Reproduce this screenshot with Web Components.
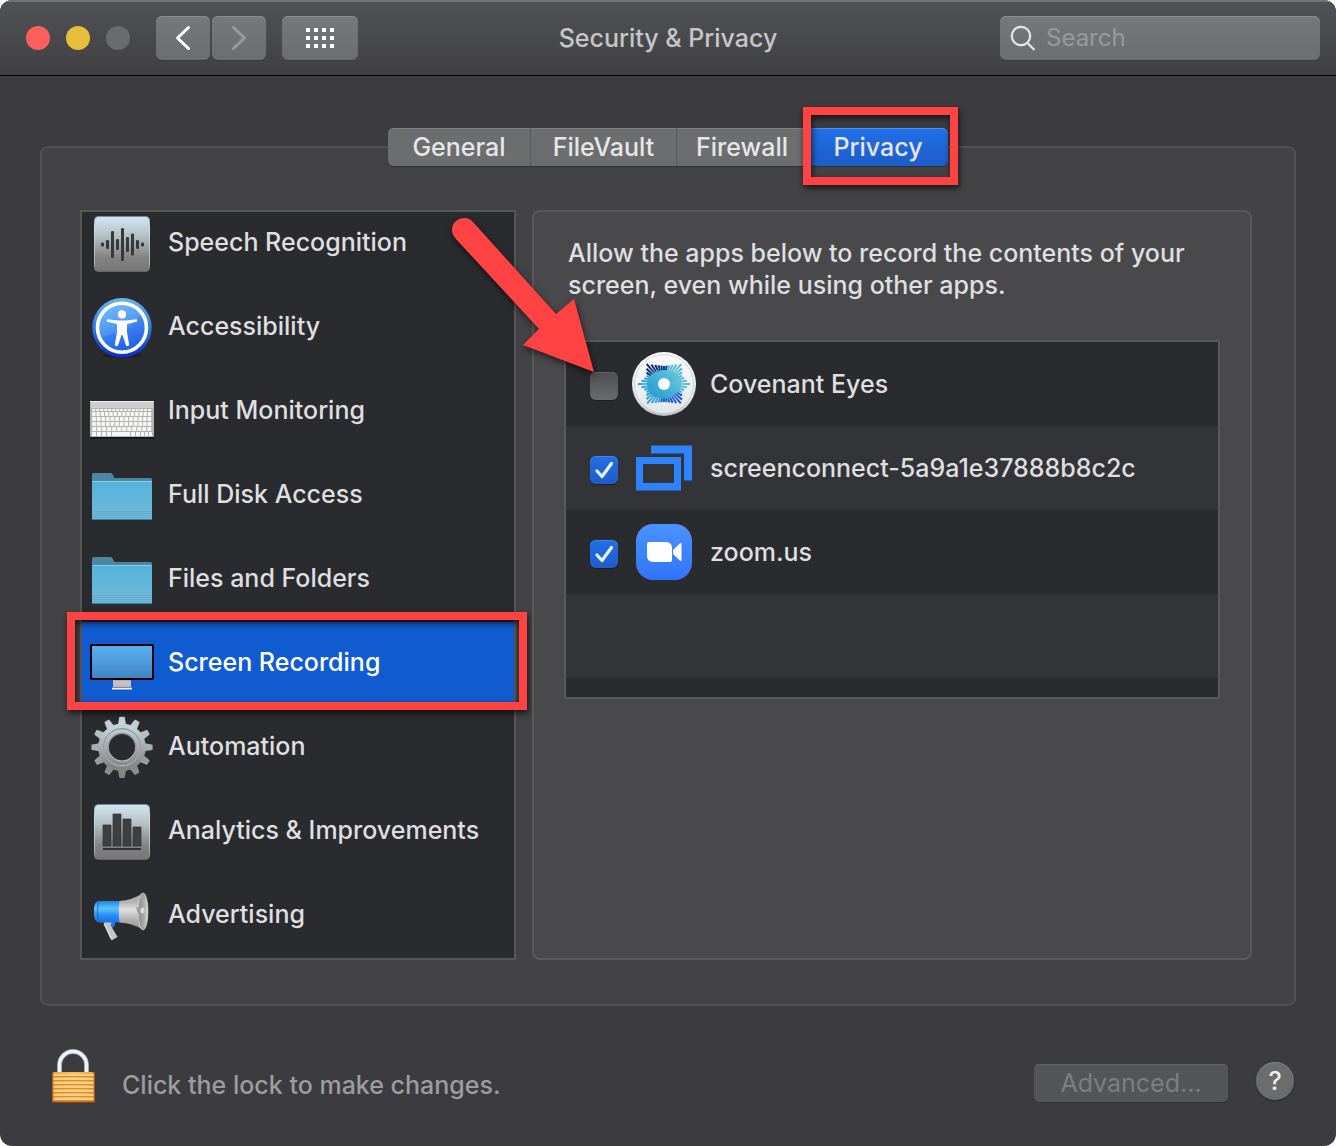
<!DOCTYPE html>
<html lang="en">
<head>
<meta charset="utf-8">
<title>Security &amp; Privacy</title>
<style>
  html, body { margin: 0; }
  body { background: #fff; font-family: Inter, "Liberation Sans", sans-serif; font-size: 25px; font-weight: 500; line-height: 32px; color: #dfdfe0; }
</style>
</head>
<body>
<pref-window>
  <window-toolbar slot="toolbar" heading="Security &amp; Privacy"></window-toolbar>
  <pane-tabs slot="tabs"></pane-tabs>
  <category-list slot="sidebar">
    <category-item icon="speech">Speech Recognition</category-item>
    <category-item icon="access">Accessibility</category-item>
    <category-item icon="keyboard">Input Monitoring</category-item>
    <category-item icon="folder">Full Disk Access</category-item>
    <category-item icon="folder">Files and Folders</category-item>
    <category-item icon="monitor" selected>Screen Recording</category-item>
    <category-item icon="gear">Automation</category-item>
    <category-item icon="chart">Analytics &amp; Improvements</category-item>
    <category-item icon="horn">Advertising</category-item>
  </category-list>
  <permission-panel slot="detail">
    <span slot="description">Allow the apps below to record the contents of your screen, even while using other apps.</span>
    <app-row icon="eyes" label="Covenant Eyes"></app-row>
    <app-row icon="connect" label="screenconnect-5a9a1e37888b8c2c" checked></app-row>
    <app-row icon="zoom" label="zoom.us" checked></app-row>
    <app-row></app-row>
    <app-row></app-row>
  </permission-panel>
  <window-footer slot="footer">Click the lock to make changes.</window-footer>
</pref-window>

<script>
const steel = id => `<linearGradient id="${id}" x1="0" y1="0" x2="0" y2="1"><stop offset="0" stop-color="#d3e6ef"/><stop offset=".35" stop-color="#b4c1c7"/><stop offset=".75" stop-color="#828282"/><stop offset="1" stop-color="#777"/></linearGradient>`;
const tile = `<defs>${steel('s')}<linearGradient id="e" x1="0" y1="0" x2="0" y2="1"><stop offset="0" stop-color="#6b8fa8"/><stop offset=".2" stop-color="#d4dfe4"/><stop offset=".85" stop-color="#b0b0b0"/><stop offset="1" stop-color="#666"/></linearGradient></defs><rect x="4.5" y="6.5" width="55" height="55" rx="4" fill="url(#s)" stroke="url(#e)"/>`;

function speech() {
  const heights = [4, 9, 27, 11, 33, 15, 22, 9, 4];
  return tile + heights.map((h, i) => `<rect x="${11 + i * 5}" y="${34.5 - h / 2}" width="3" height="${h}" rx="1.3" fill="#37393a"/>`).join('');
}
function keyboard() {
  let keys = '';
  const rows = [[31, 2, 15], [34, 4, 14], [39, 4, 13], [44, 4, 13], [49, 4, 12]];
  rows.forEach(([y, h, n]) => {
    const step = 60 / n;
    for (let i = 0; i < n; i++) keys += `<rect x="${2 + i * step + 0.2}" y="${y}" width="${step - 1}" height="${h}" rx=".6" fill="#f7f7f5"/>`;
  });
  [[2, 4], [7, 4], [12, 4], [17, 4], [22, 18], [41, 4], [46, 4], [51, 3], [55, 3], [59, 3]].forEach(([x, w]) => keys += `<rect x="${x}" y="54" width="${w}" height="4" rx=".6" fill="#f7f7f5"/>`);
  return `<rect x="0" y="58" width="64" height="3" rx="1" fill="#17181a"/><rect x="0" y="23" width="64" height="36" rx="1" fill="#b3b3b0"/><rect x="1" y="24" width="62" height="6" fill="#d0cfd0"/><rect x="0" y="23" width="64" height="1" fill="#eee"/>` + keys;
}
function gear() {
  let teeth = '';
  for (let i = 0; i < 12; i++) teeth += `<path d="M27.5 14 29.2 3.3Q29.4 2.7 30 2.7H34Q34.6 2.7 34.8 3.3L36.5 14Z" transform="rotate(${i * 30} 32 33.3)" fill="${['#c7d5db','#c1cdd3','#b5bec3','#a7acae','#999b9c','#8b8c8d','#858586','#8b8c8d','#999b9c','#a7acae','#b5bec3','#c1cdd3'][i]}"/>`;
  return `<defs><linearGradient id="g" x1="0" y1="0" x2="0" y2="1"><stop offset="0" stop-color="#c3d0d6"/><stop offset="1" stop-color="#858586"/></linearGradient><linearGradient id="h" x1="0" y1="0" x2="0" y2="1"><stop offset="0" stop-color="#798387"/><stop offset="1" stop-color="#bababa"/></linearGradient></defs>${teeth}<circle cx="32" cy="33.3" r="18.8" fill="none" stroke="url(#g)" stroke-width="10"/><circle cx="32" cy="33.3" r="18.6" fill="none" stroke="url(#h)" stroke-width="1"/><circle cx="32" cy="33.3" r="13.7" fill="none" stroke="url(#h)" stroke-width="1.2"/>`;
}
function eyes() {
  const hull = [[58, 32], [50, 40], [50, 51.5], [32, 50], [14.5, 51.5], [14.5, 40], [6, 32], [14.5, 24], [14.5, 12], [32, 14], [50, 12], [50, 24]];
  const reach = a => {
    const dx = Math.cos(a), dy = Math.sin(a);
    let best = 20;
    hull.forEach((p, i) => {
      const q = hull[(i + 1) % hull.length];
      const ex = q[0] - p[0], ey = q[1] - p[1], px = p[0] - 32, py = p[1] - 32;
      const det = dx * ey - dy * ex;
      if (Math.abs(det) < 1e-6) return;
      const t = (px * ey - py * ex) / det, u = (px * dy - py * dx) / det;
      if (t > 0 && u >= 0 && u <= 1) best = t;
    });
    return best;
  };
  let rays = '';
  const count = 44;
  for (let i = 0; i < count; i++) {
    const deg = i * 360 / count, a = deg * Math.PI / 180, r = reach(a);
    let c = '#4fb9d8';
    if (deg > 32 && deg < 105) c = '#1556cc';
    else if (deg >= 105 && deg < 210) c = '#2ba4d0';
    else if (deg >= 210 && deg < 285) c = '#0b2f7c';
    const x1 = 32 + 8 * Math.cos(a), y1 = 32 + 8 * Math.sin(a), x2 = 32 + r * Math.cos(a), y2 = 32 + r * Math.sin(a);
    const nx = -Math.sin(a), ny = Math.cos(a);
    rays += `<path d="M${x1 + nx * .6} ${y1 + ny * .6}L${x2 + nx * 1.05} ${y2 + ny * 1.05}L${x2 - nx * 1.05} ${y2 - ny * 1.05}L${x1 - nx * .6} ${y1 - ny * .6}Z" fill="${c}"/>`;
  }
  return `<defs><linearGradient id="w" x1="0" y1="0" x2="0" y2="1"><stop offset="0" stop-color="#fff"/><stop offset=".8" stop-color="#dcdfe2"/><stop offset="1" stop-color="#b9bdc1"/></linearGradient><linearGradient id="f" x1="0" y1="0" x2="0" y2="1"><stop offset="0" stop-color="#fcfcfc"/><stop offset="1" stop-color="#e2e6ea"/></linearGradient><linearGradient id="t" x1="0" y1="1" x2="1" y2="0"><stop offset="0" stop-color="#1f97d0"/><stop offset="1" stop-color="#69c9dc"/></linearGradient></defs><circle cx="32" cy="32" r="32" fill="url(#w)"/><circle cx="32" cy="32" r="29.5" fill="url(#f)" stroke="#c9cccf" stroke-width=".8"/>${rays}<ellipse cx="32" cy="32" rx="17" ry="14" fill="url(#t)"/><path d="M32 46.500Q21 46.500 17 40L22 36 42 28 48 25Q51 33 46 39.500 41 46 32 46.500Z" fill="url(#t)"/><circle cx="32" cy="32" r="6" fill="#fafdff"/>`;
}
const icons = {
  speech: speech(),
  access: `<defs><linearGradient id="a" x1="0" y1="0" x2=".35" y2="1"><stop offset="0" stop-color="#7ec0fa"/><stop offset=".55" stop-color="#4f9af6"/><stop offset="1" stop-color="#2a66ea"/></linearGradient><linearGradient id="b" x1="0" y1="0" x2="0" y2="1"><stop offset="0" stop-color="#68b7ea"/><stop offset=".5" stop-color="#2f78ea"/><stop offset="1" stop-color="#0a2ccf"/></linearGradient></defs><ellipse cx="32" cy="61" rx="20" ry="3" fill="#1f2024"/><circle cx="32" cy="33.7" r="29.7" fill="url(#b)"/><circle cx="32" cy="33.7" r="24.5" fill="url(#a)"/><path d="M9.5 43C24 42 42 34 51 21A23 23 0 0 1 18 52Z" fill="#1457e8" opacity=".25"/><circle cx="32" cy="33.7" r="24.5" fill="none" stroke="#fff" stroke-width="3.6"/><circle cx="32" cy="20.4" r="4.1" fill="#fff"/><path d="M17.5 25.2 28 26.4H36L46.500 25.200Q48 26.500 46.700 27.800L37 30V38L39.200 51Q38 53 36 51.500L32.500 41H31.500L28 51.500Q26 53 24.800 51L27 38V30L17.300 27.800Q16 26.500 17.500 25.200Z" fill="#fff"/>`,
  keyboard: keyboard(),
  folder: `<defs><linearGradient id="d" x1="0" y1="0" x2="0" y2="1"><stop offset="0" stop-color="#53b2db"/><stop offset="1" stop-color="#74b9d9"/></linearGradient></defs><path d="M2 13Q2 11 4 11H20.500Q22 11 23 13L24 15.500Q24.500 16 26 16H60.500Q62 16 62 17.500V30H2Z" fill="#4d87a4"/><rect x="2" y="19" width="60" height="39" rx="1.500" fill="url(#d)"/><rect x="2.500" y="19" width="59" height="1" fill="#86cfee"/><path d="M2 49.500H62M2 51.500H62M2 53.500H62M2 55.500H62" stroke="#5ba5c6" stroke-width=".6"/><rect x="2.500" y="57" width="59" height="1" fill="#3b7e9e"/>`,
  monitor: `<defs><linearGradient id="m" x1="0" y1="0" x2="0" y2="1"><stop offset="0" stop-color="#5bafee"/><stop offset="1" stop-color="#3e86c5"/></linearGradient><linearGradient id="n" x1="0" y1="0" x2="0" y2="1"><stop offset="0" stop-color="#aaa"/><stop offset=".3" stop-color="#c7c7c9"/><stop offset="1" stop-color="#b8b8bb"/></linearGradient></defs><rect x="0" y="14" width="64" height="36" rx="2" fill="#000"/><rect x="2" y="16" width="60" height="32" fill="url(#m)"/><rect x="23" y="50" width="18" height="7.500" fill="url(#n)"/><rect x="22" y="57" width="20" height="1" fill="#85878c"/><rect x="22" y="58" width="20" height="1.500" fill="#f2f2f2"/>`,
  gear: gear(),
  chart: tile + `<path d="M13 27h8v21h-8zM23 16h8v32h-8zM33 21h8v27h-8zM43 29h8v19h-8z" fill="#3e3f40" stroke="#303132" stroke-width=".7"/><path d="M13 50h38v2H13z" fill="#303132"/>`,
  horn: `<defs><linearGradient id="j" x1="0" y1="0" x2="0" y2="1"><stop offset="0" stop-color="#1f86e6"/><stop offset=".35" stop-color="#5cc4ff"/><stop offset=".65" stop-color="#2792f7"/><stop offset="1" stop-color="#1a70e0"/></linearGradient><linearGradient id="k" x1="0" y1="0" x2="0" y2="1"><stop offset="0" stop-color="#a5a5a6"/><stop offset=".25" stop-color="#b5b5b6"/><stop offset=".45" stop-color="#e0e0e0"/><stop offset=".75" stop-color="#adadae"/><stop offset="1" stop-color="#949495"/></linearGradient><linearGradient id="l" x1="0" y1="0" x2="1" y2="0"><stop offset="0" stop-color="#8f8f90"/><stop offset=".6" stop-color="#a9a9aa"/><stop offset="1" stop-color="#dedede"/></linearGradient></defs><path d="M18 40H25.500L24 45 21 46Z" fill="#237ce4"/><path d="M13 39H22L20.500 43 27.500 55 22.500 58Q21 58.500 20.500 57L15 44Z" fill="#c5c5c7"/><path d="M14 42 21 56" stroke="#f2f2f2"/><path d="M9 19H30V40.500H9Q4 39 4 33V26Q4 20 9 19Z" fill="url(#j)"/><path d="M8.500 20Q6 29 8.500 40" stroke="#1462bf" fill="none" stroke-width=".8"/><path d="M29.500 19Q43 18 53 11V48Q43 41 29.500 40.500Q28 29 29.500 19Z" fill="url(#k)"/><ellipse cx="53" cy="29.500" rx="5" ry="18.500" fill="url(#l)" stroke="#d9d9da" stroke-width=".7"/><path d="M46 25.500H53A2 3 0 0 1 53 31.500H48Z" fill="#9a9a9b"/><ellipse cx="52.500" cy="28.500" rx="2.200" ry="3" fill="#dadada"/>`,
  eyes: eyes(),
  connect: `<path d="M19 9.500H60V44.500H52V17.500H19Z" fill="#2c83fb"/><path fill-rule="evenodd" d="M4 21H49V54.500H4ZM11 28V47H42V28Z" fill="#2c83fb"/>`,
  zoom: `<defs><linearGradient id="z" x1="0" y1="0" x2="0" y2="1"><stop offset="0" stop-color="#4a93ff"/><stop offset="1" stop-color="#3074f6"/></linearGradient></defs><rect x="4" y="4" width="56" height="56" rx="17" fill="url(#z)"/><path d="M17 22H34Q40 22.500 40 28V40Q40 42 38 42H21Q15 41.500 15 36V24Q15 22 17 22Z" fill="#fff"/><path d="M41 30 48 23.300Q49.500 22.500 49.500 24V40Q49.500 41.500 48 40.700L41 34Z" fill="#fff"/>`
};
const drawIcon = n => icons[n] ? `<svg width="64" height="64" viewBox="0 0 64 64" aria-hidden="true">${icons[n]}</svg>` : '';
const base = `:host,*{box-sizing:border-box} button,input{font:inherit;color:inherit;margin:0;padding:0;border:0;background:none} svg{display:block;flex:none}`;

class Base extends HTMLElement {
  connectedCallback() {
    if (this.shadowRoot) return;
    this.attachShadow({ mode: 'open' }).innerHTML = `<style>${base}${this.css()}</style>${this.html()}`;
  }
}

customElements.define('pref-window', class extends Base {
  css() { return `
    :host{display:flex;flex-direction:column;min-height:100vh;background:#3c3c40;border-radius:12px;overflow:hidden}
    main{flex:1;display:flex;flex-direction:column;padding:52px 40px 0}
    .tabs{display:flex;justify-content:center;z-index:1}
    .group{flex:1;display:flex;gap:16px;margin-top:-20px;padding:62px 42px 44px 38px;border:2px solid #505154;border-radius:8px;background:#434346}
    ::slotted([slot=sidebar]){flex:0 0 436px}
    ::slotted([slot=detail]){flex:1}`; }
  html() { return `<slot name="toolbar"></slot><main><div class="tabs"><slot name="tabs"></slot></div><section class="group"><slot name="sidebar"></slot><slot name="detail"></slot></section></main><slot name="footer"></slot>`; }
});

customElements.define('window-toolbar', class extends Base {
  css() { return `
    :host{display:grid;grid-template-columns:1fr auto 1fr;align-items:center;height:76px;padding:0 16px 1px;border-top:2px solid #707275;border-bottom:1px solid #000;background:linear-gradient(#515256,#404042)}
    .left{display:flex;align-items:center;padding-left:10px}
    .lights{display:flex;gap:16px;margin-right:26px}
    .lights button{width:24px;height:24px;border-radius:50%;background:#6a6b6d}
    .lights .close{background:#ff5f5a}.lights .min{background:#e5bf3c}
    .btn{width:54px;height:44px;display:grid;place-items:center;border-radius:6px;margin-right:2px;background:linear-gradient(#77787b,#6c6d70);box-shadow:inset 0 1px #8b8c8f,0 1px #38393b}
    .all{width:76px;margin-left:14px;margin-right:0}
    h1{margin:0;font-size:25px;font-weight:500;line-height:32px;color:#c6c6c8}
    .search{justify-self:end;width:320px;height:44px;display:flex;align-items:center;gap:10px;padding:0 10px;border-radius:6px;background:linear-gradient(#77787b,#6c6d70);box-shadow:inset 0 1px #8b8c8f,0 1px #38393b}
    input{min-width:0;flex:1;outline:0;font-size:24px;font-weight:400} input::placeholder{color:#98999b;opacity:1}`; }
  html() {
    let dots = '';
    for (let y = 0; y < 3; y++) for (let x = 0; x < 4; x++) dots += `<rect x="${x * 8}" y="${y * 8}" width="4" height="4"/>`;
    return `<div class="left"><div class="lights"><button class="close" aria-label="Close"></button><button class="min" aria-label="Minimize"></button><button aria-label="Zoom" disabled></button></div>
    <button class="btn" aria-label="Back"><svg width="16" height="26" fill="none" stroke="#fff" stroke-width="3" stroke-linecap="round" stroke-linejoin="round"><path d="M13.500 2.500 2.500 13 13.500 23.500"/></svg></button>
    <button class="btn" aria-label="Forward" disabled><svg width="16" height="26" fill="none" stroke="#98999b" stroke-width="3" stroke-linecap="round" stroke-linejoin="round"><path d="M2.500 2.500 13.500 13 2.500 23.500"/></svg></button>
    <button class="btn all" aria-label="Show All"><svg width="28" height="20" fill="#fff">${dots}</svg></button></div>
    <h1>${this.getAttribute('heading').replace('&', '&amp;')}</h1>
    <label class="search"><svg width="26" height="28" fill="none" stroke="#e6e6e7" stroke-width="2.200"><circle cx="11" cy="12" r="9.200"/><path d="M17.500 19 24.500 26"/></svg><input type="text" placeholder="Search" aria-label="Search"></label>`;
  }
});

customElements.define('call-out', class extends Base {
  css() { return `:host{display:block;position:absolute;border:8px solid #ff4343;filter:drop-shadow(1px 3px 3px rgba(0,0,0,.7));pointer-events:none}`; }
  html() { return ''; }
});

customElements.define('pane-tabs', class extends Base {
  css() { return `
    :host{display:block}
    [role=tablist]{display:flex;gap:1px;position:relative;border-radius:6px;background:#58595b;box-shadow:0 1px 1px #303133}
    button{height:38px;min-width:130px;padding:0;background:#6c6d6f;color:#e6e6e7;line-height:38px;box-shadow:inset 0 1px #828385}
    button:first-child{width:142px;border-radius:6px 0 0 6px}
    button:nth-child(2){width:145px}
    .on{width:140px;border-radius:0 6px 6px 0;background:linear-gradient(#2170e8,#1d5dc8);box-shadow:inset 0 1px #4b8cf0}
    call-out{top:-21px;right:-10px;width:155px;height:78px}`; }
  html() { return `<div role="tablist"><button role="tab">General</button><button role="tab">FileVault</button><button role="tab">Firewall</button><button role="tab" class="on" aria-selected="true">Privacy</button><call-out></call-out></div>`; }
});

customElements.define('category-list', class extends Base {
  css() { return `
    :host{display:block;position:relative}
    nav{height:750px;display:flex;flex-direction:column;justify-content:flex-end;overflow:hidden;padding-bottom:2px;border:2px solid #555657;background:#2a2b2f}
    call-out{left:-13px;right:-11px;bottom:250px;height:98px}`; }
  html() { return `<nav aria-label="Privacy categories"><slot></slot></nav><call-out></call-out>`; }
});

customElements.define('category-item', class extends Base {
  css() { return `
    :host{display:block;flex:none}
    button{display:flex;align-items:center;gap:14px;width:100%;height:84px;padding:0 8px;text-align:left}
    :host([selected]) button{color:#fff;background:linear-gradient(#105bd0,#105bd0) 0 2px no-repeat}`; }
  html() { return `<button>${drawIcon(this.getAttribute('icon'))}<span><slot></slot></span></button>`; }
});

customElements.define('permission-panel', class extends Base {
  css() { return `
    :host{display:block;position:relative;padding:25px 30px 0;border:2px solid #58595c;border-radius:8px;background:#49494c}
    p{margin:0 4px 39px}
    .apps{height:359px;overflow:hidden;border:2px solid #58595b;background:#2a2b2f}
    .arrow{position:absolute;left:-90px;top:-2px;overflow:visible;filter:drop-shadow(1px 3px 3px rgba(0,0,0,.6));pointer-events:none}`; }
  html() { return `<p><slot name="description"></slot></p><div class="apps"><slot></slot></div>
    <svg class="arrow" width="160" height="170" viewBox="444 210 160 170" aria-hidden="true"><path d="M455 238A11.500 11.500 0 0 1 473 222L556 314 574 299 594 372 523 345 539 329Z" fill="#ff4343"/></svg>`; }
});

customElements.define('app-row', class extends Base {
  css() { return `
    :host{display:block;height:84px} :host(:nth-of-type(even)){background:#333438}
    label{display:flex;align-items:center;height:84px;padding-left:24px;gap:14px}
    .box{display:grid;margin-top:4px} .box>*{grid-area:1/1}
    input{appearance:none;width:28px;height:28px;border-radius:6px;background:linear-gradient(#4d4e50,#6a6b6c);box-shadow:inset 0 1px #626365,0 1px 1px #1c1d1f}
    input:checked{background:linear-gradient(#216fe6,#1d5ec9);box-shadow:inset 0 1px #4385ec,0 1px 1px #1c1d1f}
    .box svg{pointer-events:none;visibility:hidden} input:checked+svg{visibility:visible}`; }
  html() {
    const name = this.getAttribute('label');
    return name ? `<label><span class="box"><input type="checkbox" ${this.hasAttribute('checked') ? 'checked' : ''}><svg width="28" height="28" fill="none" stroke="#e9effa" stroke-width="3.200" stroke-linecap="round" stroke-linejoin="round"><path d="M7 15 12 20.500 21.500 7.500"/></svg></span>${drawIcon(this.getAttribute('icon'))}<span>${name}</span></label>` : '';
  }
});

customElements.define('window-footer', class extends Base {
  css() { return `
    :host{display:flex;align-items:center;height:140px;padding:0 42px 0 50px;color:#9d9d9f}
    .lock{display:flex;align-items:center;gap:26px;margin-right:auto;padding-top:18px}
    .lock svg{margin-top:-16px}
    .adv{width:194px;height:38px;margin:14px 28px 0 0;border-radius:5px;background:#545558;color:#7d7e80;font-weight:400;line-height:38px;box-shadow:inset 0 1px #616265,0 1px 1px #333}
    .help{width:38px;height:38px;margin-top:10px;border-radius:50%;background:#6b6c6e;color:#f0f0f0;line-height:38px;box-shadow:inset 0 1px #7e7f81,0 1px 2px #28292b}`; }
  html() {
    let lines = '';
    for (let i = 0; i < 7; i++) lines += `<rect x="3.500" y="${26 + i * 4}" width="40" height="1.800" fill="#ffd384"/><rect x="3" y="${28 + i * 4}" width="41" height="1" fill="#d98f3a"/>`;
    return `<button class="lock"><svg width="46" height="58" viewBox="0 0 46 58" aria-hidden="true"><defs><linearGradient id="o"><stop offset="0" stop-color="#a8500f"/><stop offset=".06" stop-color="#eba64a"/><stop offset=".5" stop-color="#f8bd62"/><stop offset=".94" stop-color="#eba64a"/><stop offset="1" stop-color="#9c480b"/></linearGradient></defs><path d="M9.500 24V17A13.500 13.500 0 0 1 36.500 17V24" fill="none" stroke="#8e9da5" stroke-width="5"/><path d="M9.500 24V17A13.500 13.500 0 0 1 36.500 17V24" fill="none" stroke="#edf3f6" stroke-width="3.400"/><rect x="2" y="24" width="43" height="31" rx="1.500" fill="url(#o)"/>${lines}<rect x="2" y="53.500" width="43" height="1.500" fill="#963f08"/></svg><span><slot></slot></span></button>
    <button class="adv" disabled>Advanced...</button><button class="help" aria-label="Help">?</button>`;
  }
});
</script>
</body>
</html>
